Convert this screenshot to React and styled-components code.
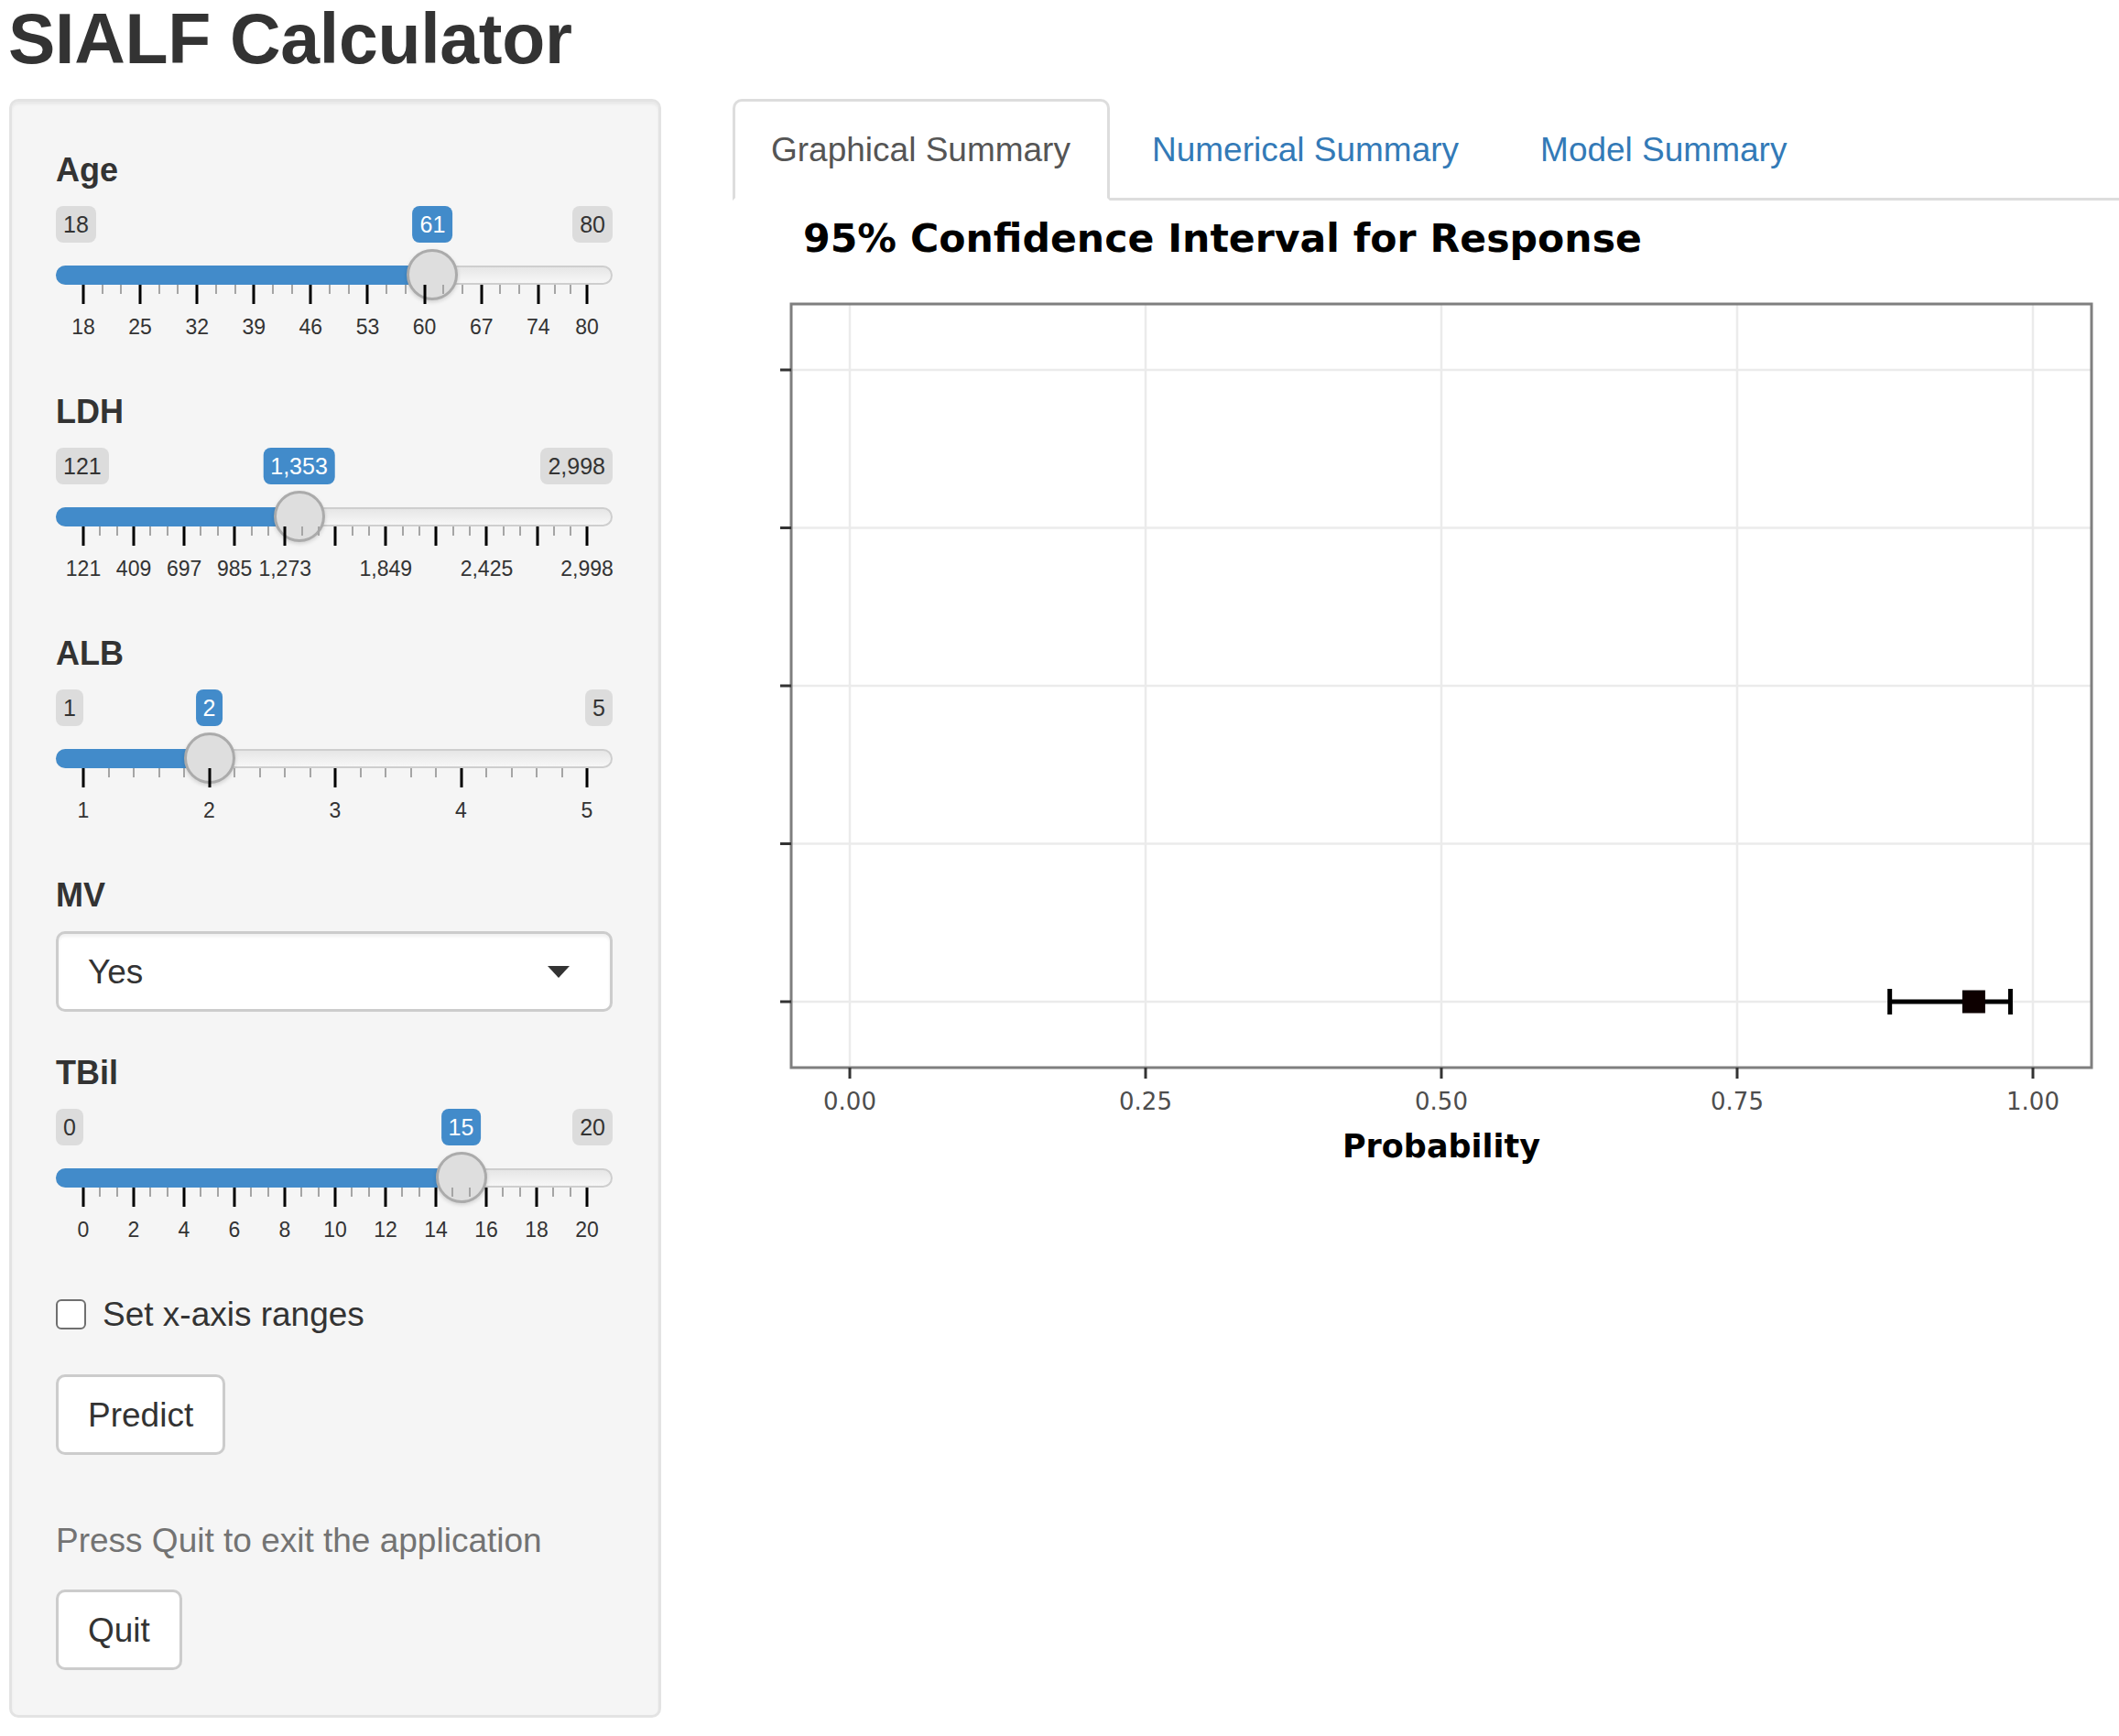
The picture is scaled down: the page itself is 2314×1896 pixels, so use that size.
import React from 'react';
import styled, { createGlobalStyle } from 'styled-components';

const GlobalStyle = createGlobalStyle`
  html, body { margin: 0; padding: 0; background: #fff; }
  body {
    font-family: "Liberation Sans", Arial, Helvetica, sans-serif;
    color: #333;
    font-size: 37px;
    line-height: 53px;
  }
  * { box-sizing: border-box; }
`;

const Page = styled.div`
  width: 2314px;
  min-height: 1896px;
  overflow: hidden;
`;

const Title = styled.h2`
  margin: 0;
  padding-left: 9px;
  font-size: 77px;
  line-height: 85px;
  font-weight: 700;
  color: #333;
  letter-spacing: -0.3px;
`;

const Layout = styled.div`
  display: flex;
  align-items: flex-start;
  margin-top: 23px;
`;

const Sidebar = styled.div`
  flex: none;
  margin-left: 10px;
  width: 712px;
  background: #f5f5f5;
  border: 3px solid #e3e3e3;
  border-radius: 10px;
  box-shadow: inset 0 3px 3px rgba(0, 0, 0, 0.05);
  padding: 48px 50px 49px 48px;
`;

const FormGroup = styled.div`
  margin-bottom: 40px;
`;

const FieldLabel = styled.label`
  display: block;
  font-weight: 700;
  font-size: 36px;
  line-height: 53px;
  margin-bottom: 13px;
`;

const SliderBox = styled.div`
  position: relative;
  height: 158px;
`;

const LabelsRow = styled.div`
  position: relative;
  display: flex;
  justify-content: space-between;
  height: 40px;
`;

const Badge = styled.span`
  display: inline-block;
  font-size: 25px;
  line-height: 34px;
  padding: 3px 8px;
  border-radius: 8px;
  white-space: nowrap;
  background: ${(p) => (p.$value ? '#428bca' : '#dcdcdc')};
  color: ${(p) => (p.$value ? '#fff' : '#333')};
`;

const FloatingBadge = styled(Badge)`
  position: absolute;
  top: 0;
  transform: translateX(-50%);
`;

const TrackArea = styled.div`
  position: relative;
  margin-top: 25px;
  height: 21px;
`;

const Line = styled.div`
  height: 21px;
  border: 2px solid #cecece;
  border-radius: 11px;
  background: linear-gradient(to bottom, #dedede -50%, #ffffff 150%);
`;

const Bar = styled.div`
  position: absolute;
  left: 0;
  top: 0;
  height: 21px;
  background: #428bca;
  border-radius: 11px 0 0 11px;
`;

const Handle = styled.div`
  position: absolute;
  top: -18px;
  width: 56px;
  height: 56px;
  border-radius: 50%;
  background: #dedede;
  border: 3px solid #ababab;
  box-shadow: 0 2px 4px rgba(0, 0, 0, 0.15);
  transform: translateX(-50%);
`;

const Grid = styled.div`
  position: relative;
  margin: 0 28px 0 30px;
  height: 72px;
`;

const Tick = styled.span`
  position: absolute;
  top: 0;
  width: ${(p) => (p.$minor ? '2px' : '3px')};
  height: ${(p) => (p.$minor ? '10px' : '21px')};
  background: ${(p) => (p.$minor ? '#a5a5a5' : '#000')};
  transform: translateX(-50%);
`;

const GridText = styled.span`
  position: absolute;
  top: 33px;
  font-size: 23px;
  line-height: 26px;
  color: #333;
  white-space: nowrap;
  transform: translateX(-50%);
`;

const SelectBox = styled.div`
  display: flex;
  align-items: center;
  justify-content: space-between;
  height: 88px;
  background: #fff;
  border: 3px solid #cccccc;
  border-radius: 10px;
  padding: 0 44px 0 32px;
  font-size: 37px;
  color: #333;
  box-shadow: inset 0 3px 3px rgba(0, 0, 0, 0.06);
`;

const Caret = styled.span`
  width: 0;
  height: 0;
  border-style: solid;
  border-width: 13px 12px 0 12px;
  border-color: #333 transparent transparent transparent;
`;

const CheckRow = styled.div`
  display: flex;
  align-items: center;
  height: 53px;
`;

const CheckBox = styled.span`
  width: 33px;
  height: 33px;
  border: 2px solid #6f6f6f;
  border-radius: 6px;
  background: #fff;
`;

const CheckLabel = styled.span`
  margin-left: 18px;
  font-size: 37px;
`;

const Button = styled.button`
  display: block;
  margin-top: ${(p) => p.$top}px;
  height: 88px;
  padding: 0 32px;
  background: #fff;
  border: 3px solid #cccccc;
  border-radius: 10px;
  font-family: inherit;
  font-size: 37px;
  line-height: 53px;
  color: #333;
`;

const HelpText = styled.p`
  margin: 67px 0 0;
  color: #737373;
  font-size: 37px;
  line-height: 53px;
`;

const Main = styled.div`
  flex: 1;
  margin-left: 78px;
`;

const TabBar = styled.ul`
  display: flex;
  list-style: none;
  margin: 0;
  padding: 0;
  border-bottom: 3px solid #dddddd;
`;

const Tab = styled.li`
  margin-bottom: -3px;
  margin-right: 4px;
  padding: 26px 40px 26px 39px;
  font-size: 37px;
  line-height: 53px;
  white-space: nowrap;
  border: 3px solid transparent;
  border-radius: 10px 10px 0 0;
  color: ${(p) => (p.$active ? '#555' : '#337ab7')};
  background: ${(p) => (p.$active ? '#fff' : 'transparent')};
  border-color: ${(p) => (p.$active ? '#ddd #ddd transparent' : 'transparent')};
`;

const PlotSvg = styled.svg`
  display: block;
`;

const fmt = (v) => Number(v).toLocaleString('en-US');

function buildGrid(min, max, scaleStep, bigNum, smallMax) {
  const bigP = 100 / bigNum;
  const big = [];
  const small = [];
  for (let i = 0; i < Math.ceil(bigNum) + 1; i++) {
    let w = bigP * i;
    if (w > 100.0001) w = 100;
    const val = i * bigP >= 100 ? max : min + scaleStep * i;
    big.push({ pos: w, val });
    if (i > 0) {
      const prev = bigP * (i - 1);
      const sp = (w - prev) / (smallMax + 1);
      for (let z = 1; z <= smallMax; z++) small.push(w - sp * z);
    }
  }
  return { big, small };
}

const sliders = [
  { label: 'Age', min: 18, max: 80, value: 61, grid: buildGrid(18, 80, 7, 62 / 7, 2), hide: [] },
  { label: 'LDH', min: 121, max: 2998, value: 1353, grid: buildGrid(121, 2998, 288, 2877 / 288, 2), hide: [5, 7, 9] },
  { label: 'ALB', min: 1, max: 5, value: 2, grid: buildGrid(1, 5, 1, 4, 4), hide: [] },
];

const tbil = { label: 'TBil', min: 0, max: 20, value: 15, grid: buildGrid(0, 20, 2, 10, 2), hide: [] };

function Slider({ s }) {
  const p = (s.value - s.min) / (s.max - s.min);
  const at = `calc(30px + ${p} * (100% - 58px))`;
  return (
    <FormGroup>
      <FieldLabel>{s.label}</FieldLabel>
      <SliderBox>
        <LabelsRow>
          <Badge>{fmt(s.min)}</Badge>
          <Badge>{fmt(s.max)}</Badge>
          <FloatingBadge $value style={{ left: at }}>{fmt(s.value)}</FloatingBadge>
        </LabelsRow>
        <TrackArea>
          <Line />
          <Bar style={{ width: at }} />
          <Handle style={{ left: at }} />
        </TrackArea>
        <Grid>
          {s.grid.small.map((pos, i) => (
            <Tick key={'s' + i} $minor style={{ left: pos + '%' }} />
          ))}
          {s.grid.big.map((b, i) => (
            <Tick key={'b' + i} style={{ left: b.pos + '%' }} />
          ))}
          {s.grid.big.map((b, i) =>
            s.hide.includes(i) ? null : (
              <GridText key={'t' + i} style={{ left: b.pos + '%' }}>
                {fmt(b.val)}
              </GridText>
            )
          )}
        </Grid>
      </SliderBox>
    </FormGroup>
  );
}

function Plot() {
  const xp = (v) => 128 + v * 1292;
  const ys = [185, 357.5, 530, 702.5, 875];
  const xs = [0, 0.25, 0.5, 0.75, 1];
  const lo = xp(0.879);
  const hi = xp(0.981);
  const est = xp(0.95);
  const yc = 875;
  return (
    <PlotSvg width="1514" height="1100" viewBox="0 0 1514 1100">
      <text
        x="77"
        y="56"
        fontFamily="'DejaVu Sans', Verdana, sans-serif"
        fontWeight="700"
        fontSize="43"
        fill="#000"
        textLength="916"
        lengthAdjust="spacingAndGlyphs"
      >
        95% Confidence Interval for Response
      </text>
      <rect x="64" y="113" width="1420" height="834" fill="#fff" />
      {ys.map((y) => (
        <line key={'gy' + y} x1="64" x2="1484" y1={y} y2={y} stroke="#ebebeb" strokeWidth="2.5" />
      ))}
      {xs.map((v) => (
        <line key={'gx' + v} x1={xp(v)} x2={xp(v)} y1="113" y2="947" stroke="#ebebeb" strokeWidth="2.5" />
      ))}
      <rect x="64" y="113" width="1420" height="834" fill="none" stroke="#7f7f7f" strokeWidth="3" />
      {ys.map((y) => (
        <line key={'ty' + y} x1="52" x2="64" y1={y} y2={y} stroke="#333" strokeWidth="3" />
      ))}
      {xs.map((v) => (
        <line key={'tx' + v} x1={xp(v)} x2={xp(v)} y1="947" y2="959" stroke="#333" strokeWidth="3" />
      ))}
      {xs.map((v) => (
        <text
          key={'lx' + v}
          x={xp(v)}
          y="993"
          textAnchor="middle"
          fontFamily="'DejaVu Sans', Verdana, sans-serif"
          fontSize="26"
          fill="#4d4d4d"
        >
          {v.toFixed(2)}
        </text>
      ))}
      <text
        x="774"
        y="1045"
        textAnchor="middle"
        fontFamily="'DejaVu Sans', Verdana, sans-serif"
        fontWeight="700"
        fontSize="35"
        fill="#000"
      >
        Probability
      </text>
      <line x1={lo} x2={hi} y1={yc} y2={yc} stroke="#000" strokeWidth="5" />
      <line x1={lo} x2={lo} y1={yc - 14} y2={yc + 14} stroke="#000" strokeWidth="5" />
      <line x1={hi} x2={hi} y1={yc - 14} y2={yc + 14} stroke="#000" strokeWidth="5" />
      <rect x={est - 12.5} y={yc - 12.5} width="25" height="25" fill="#0d0000" />
    </PlotSvg>
  );
}

export default function App() {
  return (
    <Page>
      <GlobalStyle />
      <Title>SIALF Calculator</Title>
      <Layout>
        <Sidebar>
          {sliders.map((s) => (
            <Slider key={s.label} s={s} />
          ))}
          <FormGroup>
            <FieldLabel>MV</FieldLabel>
            <SelectBox>
              <span>Yes</span>
              <Caret />
            </SelectBox>
          </FormGroup>
          <Slider s={tbil} />
          <CheckRow>
            <CheckBox />
            <CheckLabel>Set x-axis ranges</CheckLabel>
          </CheckRow>
          <Button $top={39}>Predict</Button>
          <HelpText>Press Quit to exit the application</HelpText>
          <Button $top={27}>Quit</Button>
        </Sidebar>
        <Main>
          <TabBar>
            <Tab $active>Graphical Summary</Tab>
            <Tab>Numerical Summary</Tab>
            <Tab>Model Summary</Tab>
          </TabBar>
          <Plot />
        </Main>
      </Layout>
    </Page>
  );
}
